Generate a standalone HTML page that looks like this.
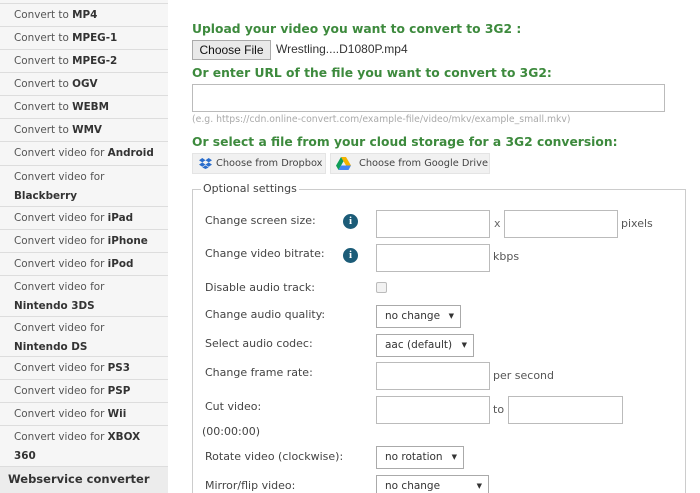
<!DOCTYPE html>
<html><head><meta charset="utf-8">
<style>
*{margin:0;padding:0;box-sizing:border-box}
html,body{width:700px;height:493px;overflow:hidden}
body{background:#fff;font-family:"DejaVu Sans",sans-serif;color:#333;position:relative}
.a{position:absolute;white-space:nowrap}
#side{position:absolute;left:0;top:0;width:168px;height:493px;background:#f6f6f6}
.it{position:absolute;left:0;width:168px;border-top:1px solid #ddd;font-size:10.4px;color:#555;padding-left:14px;padding-top:2px;line-height:19px}
.it b{color:#333}
.h{position:absolute;left:192px;font-weight:bold;font-size:12.3px;color:#3d8a3d;white-space:nowrap}
.inp{position:absolute;border:1px solid #bbb;background:#fff}
.lbl{position:absolute;left:205px;font-size:11px;color:#444;white-space:nowrap}
.sel{position:absolute;border:1px solid #aaa;background:#fff;font-size:10.5px;color:#333;padding-left:8px;line-height:20px}
.sel:after{content:"▼";position:absolute;right:6px;top:0;font-size:7px}
.info{position:absolute;left:343px;width:15px;height:15px;border-radius:50%;background:#1c5c78;color:#fff;font-size:11px;font-weight:bold;text-align:center;line-height:15px;font-family:"Liberation Serif",serif}
.btn{position:absolute;background:#f1f1f1;border:1px solid #e4e4e4;font-size:9.8px;color:#444;line-height:19px;white-space:nowrap}
</style></head><body>
<div id="side">
<div class="it" style="top:3px;height:23px">Convert to <b>MP4</b></div>
<div class="it" style="top:26px;height:23px">Convert to <b>MPEG-1</b></div>
<div class="it" style="top:49px;height:23px">Convert to <b>MPEG-2</b></div>
<div class="it" style="top:72px;height:23px">Convert to <b>OGV</b></div>
<div class="it" style="top:95px;height:23px">Convert to <b>WEBM</b></div>
<div class="it" style="top:118px;height:23px">Convert to <b>WMV</b></div>
<div class="it" style="top:141px;height:24px">Convert video for <b>Android</b></div>
<div class="it" style="top:165px;height:41px">Convert video for<br><b>Blackberry</b></div>
<div class="it" style="top:206px;height:23px">Convert video for <b>iPad</b></div>
<div class="it" style="top:229px;height:23px">Convert video for <b>iPhone</b></div>
<div class="it" style="top:252px;height:23px">Convert video for <b>iPod</b></div>
<div class="it" style="top:275px;height:41px">Convert video for<br><b>Nintendo 3DS</b></div>
<div class="it" style="top:316px;height:40px">Convert video for<br><b>Nintendo DS</b></div>
<div class="it" style="top:356px;height:23px">Convert video for <b>PS3</b></div>
<div class="it" style="top:379px;height:23px">Convert video for <b>PSP</b></div>
<div class="it" style="top:402px;height:23px">Convert video for <b>Wii</b></div>
<div class="it" style="top:425px;height:41px">Convert video for <b>XBOX</b><br><b>360</b></div>
<div class="it" style="top:466px;height:27px;background:#ececec;padding-left:8px;padding-top:0;font-size:11.5px;line-height:24px"><b>Webservice converter</b></div>
</div>

<div class="h" style="top:22px">Upload your video you want to convert to 3G2 :</div>
<div class="a" style="left:192px;top:40px;width:79px;height:20px;border:1px solid #aaa;background:#e9e9e9;font-family:'Liberation Sans',sans-serif;font-size:12px;text-align:center;line-height:18px;color:#111">Choose File</div>
<div class="a" style="left:276px;top:42px;font-family:'Liberation Sans',sans-serif;font-size:12px;color:#333">Wrestling....D1080P.mp4</div>
<div class="h" style="top:66px">Or enter URL of the file you want to convert to 3G2:</div>
<div class="inp" style="left:192px;top:84px;width:473px;height:28px"></div>
<div class="a" style="left:192px;top:114px;font-size:9.3px;color:#aaa">(e.g. https://cdn.online-convert.com/example-file/video/mkv/example_small.mkv)</div>
<div class="h" style="top:135px">Or select a file from your cloud storage for a 3G2 conversion:</div>
<div class="btn" style="left:192px;top:153px;width:134px;height:21px;padding-left:23px">Choose from Dropbox
<svg style="position:absolute;left:6px;top:4px" width="13" height="11" viewBox="0 0 13 11"><path fill="#2a6dcc" d="M3.3 0L0 2.2l3.3 2.2L6.5 2.2zM9.7 0L6.5 2.2l3.2 2.2L13 2.2zM0 6.6l3.3 2.2 3.2-2.2-3.2-2.2zM9.7 4.4L6.5 6.6l3.2 2.2L13 6.6zM3.3 9.5l3.2 1.5 3.2-1.5-3.2-2.1z"/></svg></div>
<div class="btn" style="left:330px;top:153px;width:160px;height:21px;padding-left:28px">Choose from Google Drive
<svg style="position:absolute;left:5px;top:3px" width="15" height="13" viewBox="0 0 15 13"><path fill="#f4b400" d="M5 0h5l5 8.5h-5z"/><path fill="#0f9d58" d="M5 0l2.5 4.3L2.5 13 0 8.6z"/><path fill="#4285f4" d="M2.5 13l2.5-4.5h10L12.5 13z"/></svg></div>

<div class="a" style="left:192px;top:189px;width:494px;height:304px;border:1px solid #ccc;border-bottom:none"></div>
<div class="a" style="left:201px;top:182px;background:#fff;padding:0 2px;font-size:11px;color:#444">Optional settings</div>

<div class="lbl" style="top:214px">Change screen size:</div>
<div class="info" style="top:214px">i</div>
<div class="inp" style="left:376px;top:210px;width:114px;height:28px"></div>
<div class="a" style="left:494px;top:217px;font-size:11px;color:#666">x</div>
<div class="inp" style="left:504px;top:210px;width:114px;height:28px"></div>
<div class="a" style="left:621px;top:217px;font-size:11px;color:#555">pixels</div>

<div class="lbl" style="top:247px">Change video bitrate:</div>
<div class="info" style="top:248px">i</div>
<div class="inp" style="left:376px;top:244px;width:114px;height:28px"></div>
<div class="a" style="left:493px;top:250px;font-size:11px;color:#555">kbps</div>

<div class="lbl" style="top:281px">Disable audio track:</div>
<div class="a" style="left:376px;top:282px;width:11px;height:11px;border:1px solid #bbb;background:#f2f2f2;border-radius:2px"></div>

<div class="lbl" style="top:308px">Change audio quality:</div>
<div class="sel" style="left:376px;top:305px;width:85px;height:23px">no change</div>

<div class="lbl" style="top:337px">Select audio codec:</div>
<div class="sel" style="left:376px;top:334px;width:98px;height:23px">aac (default)</div>

<div class="lbl" style="top:366px">Change frame rate:</div>
<div class="inp" style="left:376px;top:362px;width:114px;height:28px"></div>
<div class="a" style="left:493px;top:369px;font-size:11px;color:#555">per second</div>

<div class="lbl" style="top:400px">Cut video:</div>
<div class="inp" style="left:376px;top:396px;width:114px;height:28px"></div>
<div class="a" style="left:493px;top:403px;font-size:11px;color:#555">to</div>
<div class="inp" style="left:508px;top:396px;width:115px;height:28px"></div>
<div class="lbl" style="left:202px;top:425px">(00:00:00)</div>

<div class="lbl" style="top:450px">Rotate video (clockwise):</div>
<div class="sel" style="left:376px;top:446px;width:88px;height:23px">no rotation</div>

<div class="lbl" style="top:479px">Mirror/flip video:</div>
<div class="sel" style="left:376px;top:475px;width:113px;height:18px;border-bottom:none">no change</div>
</body></html>
